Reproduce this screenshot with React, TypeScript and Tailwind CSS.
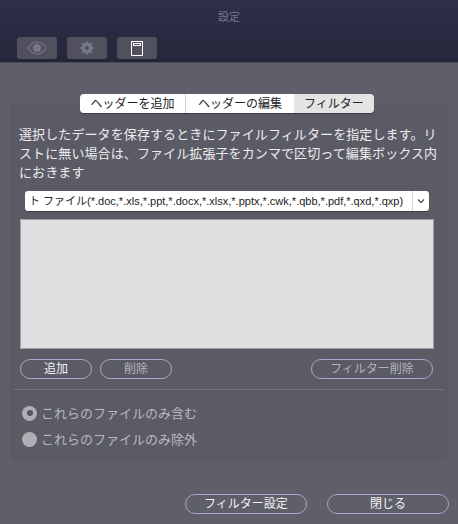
import React from "react";

function Pill({ w, children, bright }: { w: string; children: React.ReactNode; bright?: boolean }) {
  return (
    <div className={`${w} h-[20px] shrink-0 rounded-full border border-[#aba5cf] flex items-center justify-center text-[12px] leading-none ${bright ? "text-[#f2f2f4]" : "text-[#b4b4ba]"}`}>
      {children}
    </div>
  );
}

function Radio({ checked, label }: { checked?: boolean; label: string }) {
  return (
    <div className="flex items-center h-[26px] gap-[4px]">
      <div className="w-[15px] h-[15px] rounded-full bg-[#aeaeb3] flex items-center justify-center">
        {checked && <div className="w-[6px] h-[6px] rounded-full bg-[#55555f]" />}
      </div>
      <span className="text-[13px] leading-none text-[#b9b9be]">{label}</span>
    </div>
  );
}

export default function App() {
  return (
    <div className="w-[458px] h-[524px] flex flex-col bg-[#5f5f6a] overflow-hidden font-['Liberation_Sans','Noto_Sans_CJK_JP',sans-serif]">
      <div className="h-[63px] shrink-0 bg-gradient-to-b from-[#2f2f4b] to-[#25253a] border-b border-[#4a4a58] flex flex-col">
        <div className="h-[37px] pt-[9px] text-center text-[11px] leading-[16px] text-[#77778a]">設定</div>
        <div className="flex gap-[10px] pl-[17px]">
          <div className="w-[40px] h-[22px] rounded-[3px] bg-[#50505f] flex items-center justify-center">
            <svg width="20" height="14" viewBox="0 0 20 14">
              <path d="M0.800 7C3.500 2.800 6.500 1 10 1s6.500 1.800 9.200 6C16.500 11.200 13.500 13 10 13S3.500 11.200 0.800 7Z" fill="none" stroke="#77778a" strokeWidth="1.200" />
              <circle cx="10" cy="7" r="4" fill="#77778a" />
            </svg>
          </div>
          <div className="w-[40px] h-[22px] rounded-[3px] bg-[#50505f] flex items-center justify-center">
            <svg width="14" height="14" viewBox="0 0 14 14">
              <g fill="#77778a">
                <rect x="5.500" y="0.500" width="3" height="13" rx="0.500" />
                <rect x="5.500" y="0.500" width="3" height="13" rx="0.500" transform="rotate(45 7 7)" />
                <rect x="5.500" y="0.500" width="3" height="13" rx="0.500" transform="rotate(90 7 7)" />
                <rect x="5.500" y="0.500" width="3" height="13" rx="0.500" transform="rotate(135 7 7)" />
              </g>
              <circle cx="7" cy="7" r="4.800" fill="#77778a" />
              <circle cx="7" cy="7" r="2" fill="#50505f" />
            </svg>
          </div>
          <div className="w-[40px] h-[22px] rounded-[3px] bg-[#50505f] flex items-center justify-center">
            <svg width="12" height="15" viewBox="0 0 12 15">
              <rect x="0.500" y="0.500" width="11" height="14" fill="none" stroke="#fff" />
              <rect x="2.500" y="2.500" width="7" height="2" fill="none" stroke="#fff" />
            </svg>
          </div>
        </div>
      </div>

      <div className="mt-[31px] ml-[80px] flex relative z-10">
        <div className="flex h-[19px] rounded-[4px] overflow-hidden shadow-[0_1px_1px_rgba(0,0,0,0.35)] text-[12px] leading-none text-[#222]">
          <div className="w-[106px] bg-white flex items-center justify-center border-r border-[#d0d0d0]">ヘッダーを追加</div>
          <div className="w-[108px] bg-white flex items-center justify-center">ヘッダーの編集</div>
          <div className="w-[80px] bg-[#e4e4e4] flex items-center justify-center">フィルター</div>
        </div>
      </div>

      <div className="mt-[-8px] mx-[10px] h-[355px] rounded-[4px] bg-[#5b5b66] border border-[#585863] flex flex-col">
        <p className="mt-[19px] ml-[8px] text-[13px] leading-[19px] tracking-[0.1px] text-[#ececee] w-[422px]">
          選択したデータを保存するときにファイルフィルターを指定します。リストに無い場合は、ファイル拡張子をカンマで区切って編集ボックス内におきます
        </p>
        <div className="mt-[9px] ml-[14px] w-[404px] h-[20px] flex rounded-[3px] bg-white overflow-hidden shadow-[0_1px_1px_rgba(0,0,0,0.3)]">
          <div className="flex-1 min-w-0 whitespace-nowrap text-[11px] leading-[20px] text-[#222] pl-[4px]">
            ト ファイル(*.doc,*.xls,*.ppt,*.docx,*.xlsx,*.pptx,*.cwk,*.qbb,*.pdf,*.qxd,*.qxp)
          </div>
          <div className="w-[17px] shrink-0 border-l border-[#d8d8d8] flex items-center justify-center">
            <svg width="8" height="6" viewBox="0 0 8 6"><path d="M1 1.500 4 4.500 7 1.500" fill="none" stroke="#555" strokeWidth="1.300" /></svg>
          </div>
        </div>
        <div className="mt-[8px] ml-[9px] w-[414px] h-[130px] shrink-0 bg-[#dfdfe1] border border-[#a2a2a6]" />
        <div className="mt-[10px] mx-[9px] flex gap-[8px]">
          <Pill w="w-[72px]" bright>追加</Pill>
          <Pill w="w-[72px]">削除</Pill>
          <div className="ml-[131px]"><Pill w="w-[122px]">フィルター削除</Pill></div>
        </div>
        <div className="mt-[10px] mx-[3px] h-px bg-[#74747e]" />
        <div className="mt-[10px] ml-[11px] flex flex-col">
          <Radio checked label="これらのファイルのみ含む" />
          <Radio label="これらのファイルのみ除外" />
        </div>
      </div>

      <div className="mt-[34px] flex justify-end gap-[20px] pr-[9px]">
        <Pill w="w-[122px]" bright>フィルター設定</Pill>
        <Pill w="w-[122px]" bright>閉じる</Pill>
      </div>
    </div>
  );
}
